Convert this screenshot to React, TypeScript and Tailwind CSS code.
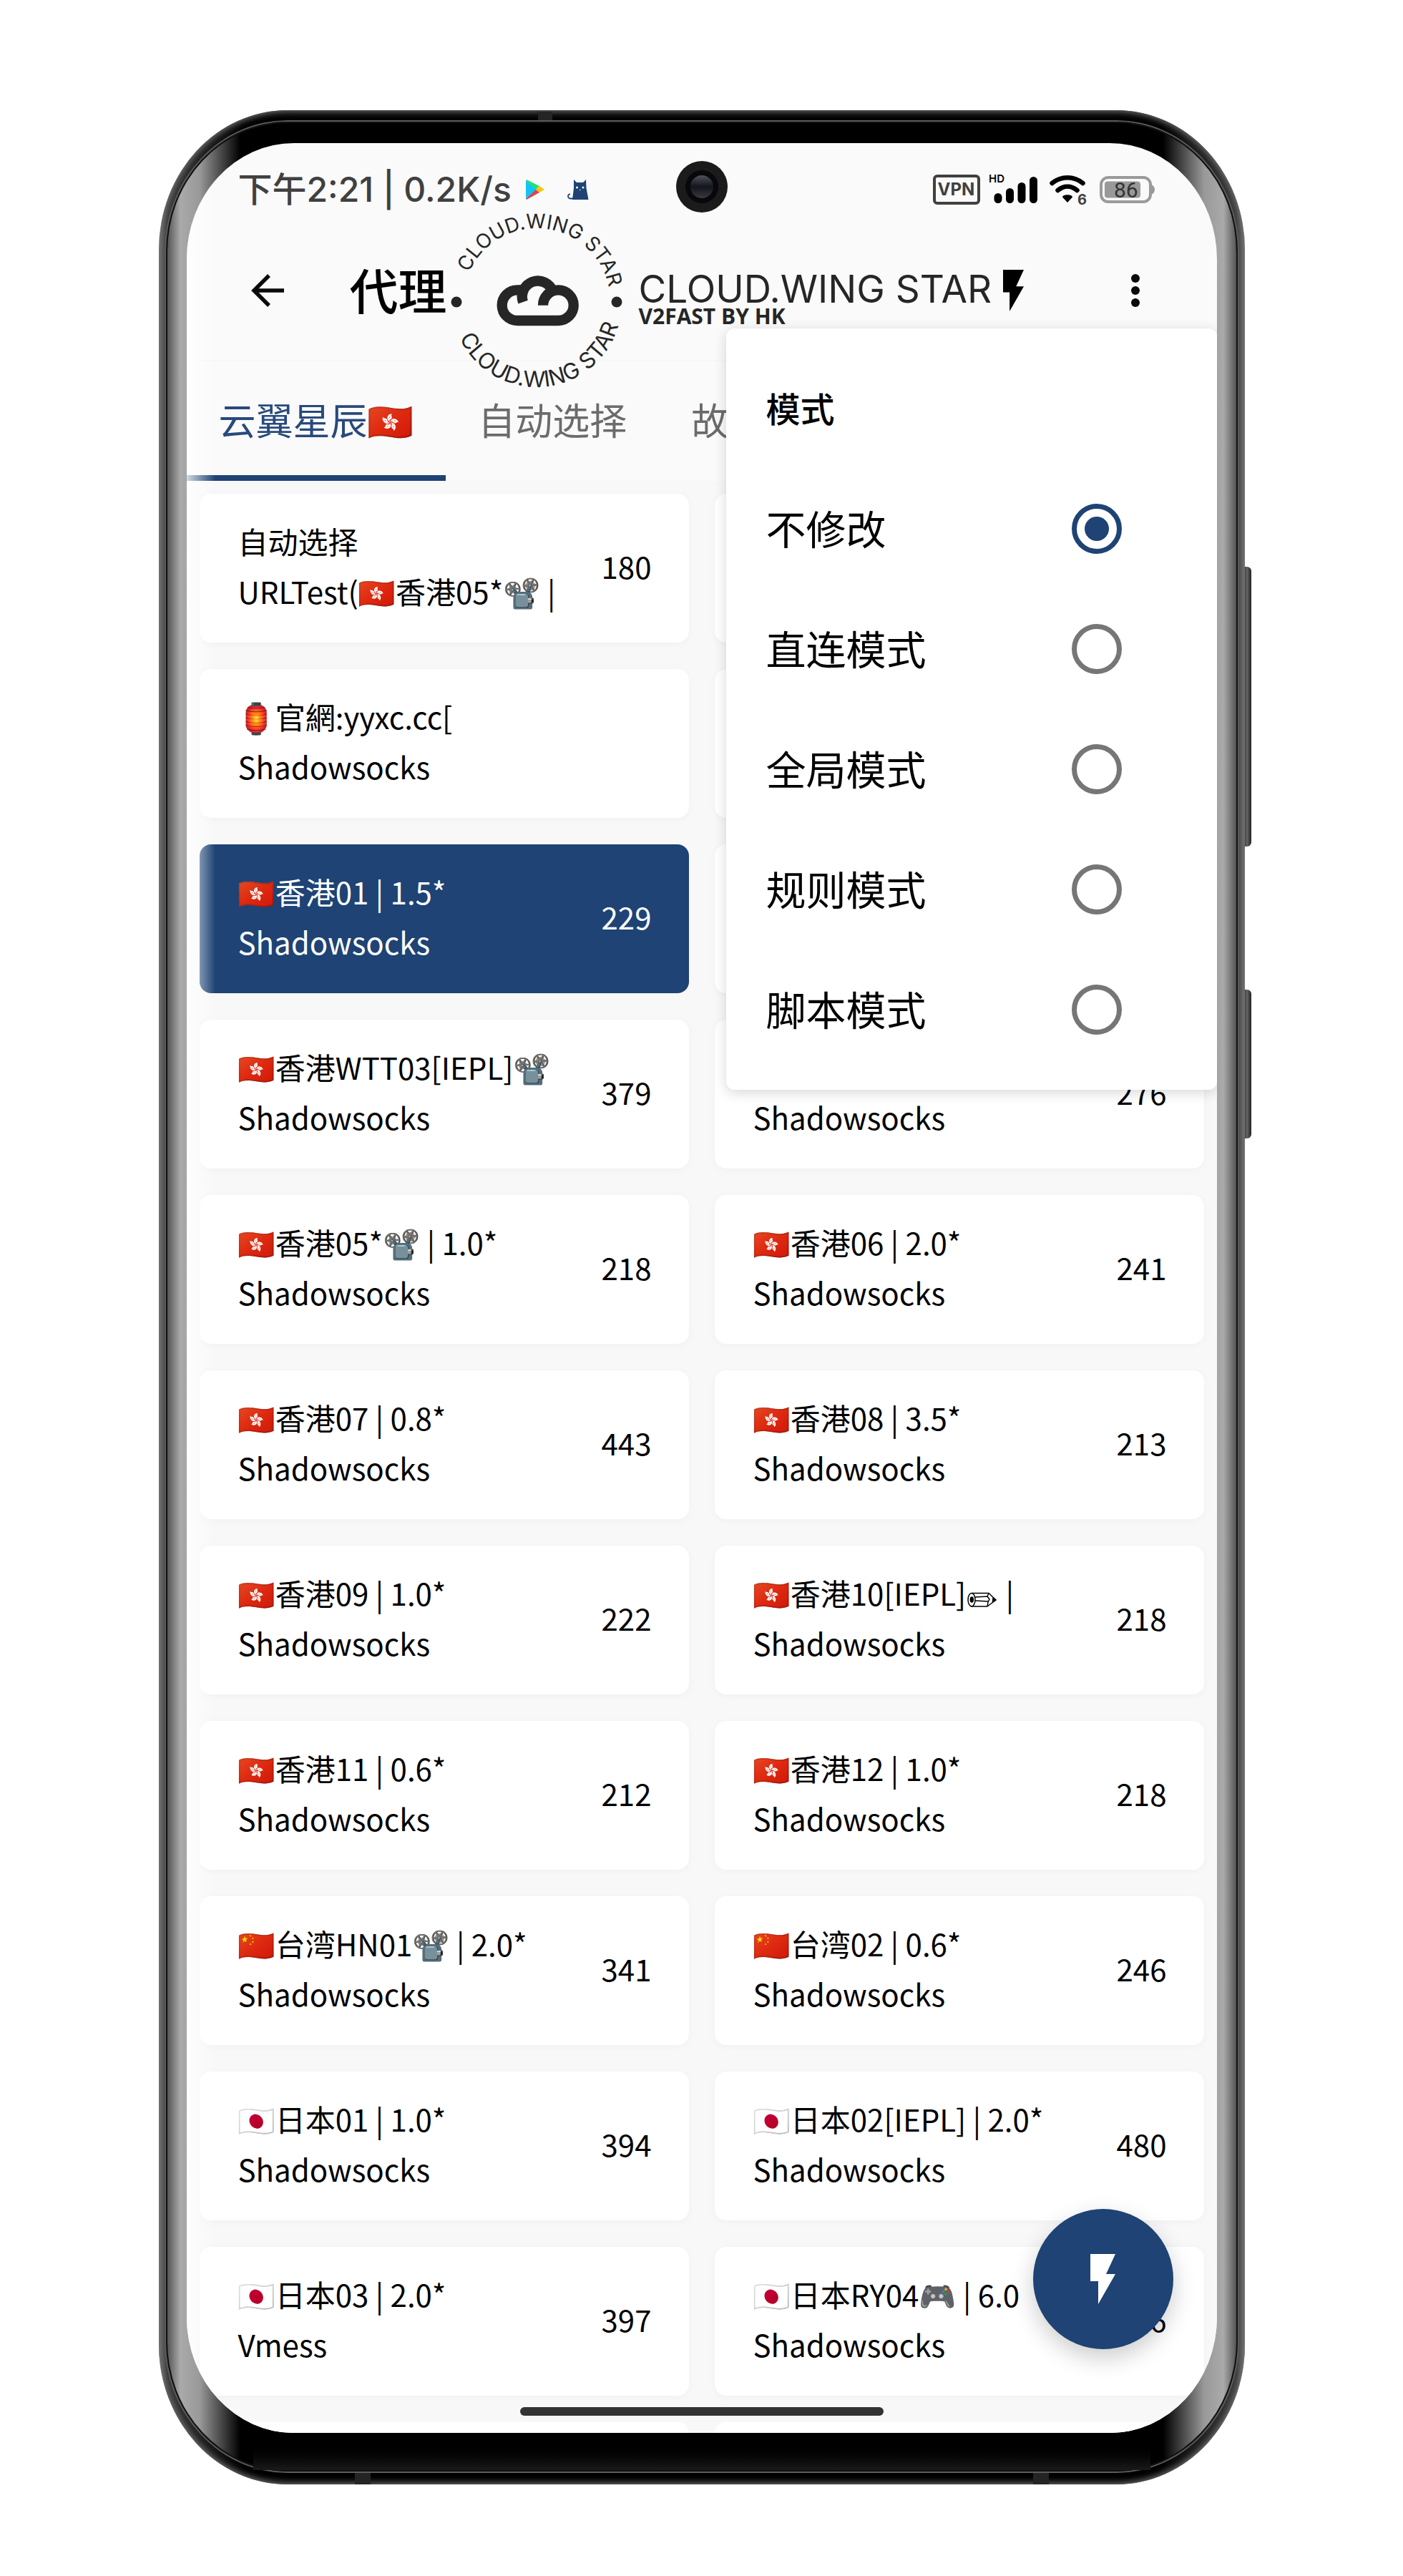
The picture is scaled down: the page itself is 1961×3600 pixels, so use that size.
import React from "react";

type Proxy = { name: React.ReactNode; kind: string; delay?: string; selected?: boolean };

function Pencil() {
  return (
    <svg
      viewBox="0 0 42 22"
      className="mx-0.5 inline-block h-[22px] w-[42px] align-[-3px]"
      fill="none"
      stroke="#000"
      strokeWidth="1.5"
      strokeLinejoin="round"
      role="img"
      aria-label="pencil"
    >
      <path d="M6 1.500 L30 1.500 L40 11 L28 20 L5 20" />
      <ellipse cx="6" cy="10.700" rx="5" ry="9.200" />
      <ellipse cx="6.300" cy="10.500" rx="2" ry="3.600" fill="#000" />
      <path d="M11 12 L30 13 M10 7 L29 6 M30 1.500 L28 6 L31 10 L29 14 L28 20" />
      <path d="M36 8 L40 11 L35.500 14 Z" fill="#000" />
    </svg>
  );
}

const proxies: Proxy[] = [
  { name: "自动选择", kind: "URLTest(🇭🇰香港05*📽️ |", delay: "180" },
  { name: "\u00a0", kind: "\u00a0" },
  { name: "🏮官網:yyxc.cc[", kind: "Shadowsocks" },
  { name: "\u00a0", kind: "\u00a0" },
  { name: "🇭🇰香港01 | 1.5*", kind: "Shadowsocks", delay: "229", selected: true },
  { name: "\u00a0", kind: "\u00a0" },
  { name: "🇭🇰香港WTT03[IEPL]📽️", kind: "Shadowsocks", delay: "379" },
  { name: "\u00a0", kind: "Shadowsocks", delay: "276" },
  { name: "🇭🇰香港05*📽️ | 1.0*", kind: "Shadowsocks", delay: "218" },
  { name: "🇭🇰香港06 | 2.0*", kind: "Shadowsocks", delay: "241" },
  { name: "🇭🇰香港07 | 0.8*", kind: "Shadowsocks", delay: "443" },
  { name: "🇭🇰香港08 | 3.5*", kind: "Shadowsocks", delay: "213" },
  { name: "🇭🇰香港09 | 1.0*", kind: "Shadowsocks", delay: "222" },
  { name: <>🇭🇰香港10[IEPL]<Pencil /> |</>, kind: "Shadowsocks", delay: "218" },
  { name: "🇭🇰香港11 | 0.6*", kind: "Shadowsocks", delay: "212" },
  { name: "🇭🇰香港12 | 1.0*", kind: "Shadowsocks", delay: "218" },
  { name: "🇨🇳台湾HN01📽️ | 2.0*", kind: "Shadowsocks", delay: "341" },
  { name: "🇨🇳台湾02 | 0.6*", kind: "Shadowsocks", delay: "246" },
  { name: "🇯🇵日本01 | 1.0*", kind: "Shadowsocks", delay: "394" },
  { name: "🇯🇵日本02[IEPL] | 2.0*", kind: "Shadowsocks", delay: "480" },
  { name: "🇯🇵日本03 | 2.0*", kind: "Vmess", delay: "397" },
  { name: "🇯🇵日本RY04🎮 | 6.0", kind: "Shadowsocks", delay: "226" },
];

const modes = ["不修改", "直连模式", "全局模式", "规则模式", "脚本模式"];

function StatusBar() {
  return (
    <div className="relative flex h-[130px] items-center justify-between pl-[72px] pr-[86px] text-[#404040]">
      <div className="flex items-center">
        <span className="font-['Inter','Noto_Sans_CJK_SC',sans-serif] text-5xl font-medium whitespace-nowrap">
          下午2:21 | 0.2K/s
        </span>
        <svg viewBox="0 0 26 28" className="ml-5 h-7 w-[26px]" aria-hidden="true">
          <path d="M0 1 L15 14 L0 27 Z" fill="#12c4f4" />
          <path d="M1 0 L19 9 L14 14 L0 1 Z" fill="#1fe07a" />
          <path d="M19 9 L26 14 L19 18 L14 14 Z" fill="#fdc40f" />
          <path d="M14 14 L19 18 L1 28 L0 27 Z" fill="#e0404c" />
        </svg>
        <svg viewBox="0 0 30 28" className="ml-8 h-7 w-[30px]" aria-hidden="true">
          <path
            d="M9 0 L13 4 H22 L26 0 L26.500 12 L29.500 28 H7 L9 12 Z"
            fill="#1e4374"
          />
          <path d="M8 26.500 H4 C0 26.500 0 20 4 20.500" fill="none" stroke="#1e4374" strokeWidth="1.800" />
          <circle cx="13.500" cy="11" r="1.500" fill="#fff" />
          <circle cx="22" cy="11" r="1.500" fill="#fff" />
          <circle cx="17.800" cy="14.500" r="0.800" fill="#fff" />
        </svg>
      </div>

      <div className="absolute left-1/2 top-[25px] flex size-[72px] -translate-x-1/2 items-center justify-center rounded-full bg-[#1b1b1c]">
        <div className="flex size-[46px] items-center justify-center rounded-full bg-[#07070c]">
          <div className="size-8 rounded-full bg-linear-to-b from-[#50545f] via-[#14151c] to-[#3a3b40]" />
        </div>
      </div>

      <div className="flex items-center">
        <span className="flex h-[42px] w-[66px] items-center justify-center rounded-md border-4 border-[#404040] font-['Inter',sans-serif] text-2xl leading-none font-bold">
          VPN
        </span>
        <svg viewBox="0 0 68 42" className="ml-3 h-[42px] w-[68px] overflow-visible text-black" aria-label="HD">
          <text x="0" y="11" fontFamily="Inter, sans-serif" fontSize="15" fontWeight="600">
            HD
          </text>
          <g stroke="currentColor" strokeWidth="11" strokeLinecap="round">
            <path d="M13 31.500 V34.500" />
            <path d="M29.500 24.500 V34.500" />
            <path d="M46 16.500 V34.500" />
            <path d="M62.500 8.500 V34.500" />
          </g>
        </svg>
        <svg viewBox="0 0 52 44" className="ml-[17px] h-11 w-[52px] overflow-visible" aria-label="Wi-Fi 6">
          <g fill="none" stroke="#000" strokeWidth="6.500" strokeLinecap="round">
            <path d="M3.500 13 C16 2.500 34 2.500 46.500 13" />
            <path d="M11.500 23 C20 16 30 16 38.500 23" />
          </g>
          <path d="M25 40 L18 32.500 C18 28 32 28 32 32.500 Z" fill="#000" />
          <text x="39" y="43" fontFamily="Inter, sans-serif" fontSize="20" fontWeight="700" fill="#404040">
            6
          </text>
        </svg>
        <svg viewBox="0 0 78 38" className="ml-[18px] h-[38px] w-[78px]" aria-label="86">
          <rect x="2" y="2" width="69" height="34" rx="10" fill="none" stroke="#9a9a9a" strokeWidth="4" />
          <path d="M72 12 Q77 14 77 19 Q77 24 72 26 Z" fill="#9a9a9a" />
          <rect x="7" y="7.500" width="50" height="23" rx="4" fill="#999" />
          <text x="20" y="30" fontFamily="Roboto, sans-serif" fontSize="30" fontWeight="400" fill="#333">
            86
          </text>
        </svg>
      </div>
    </div>
  );
}

function RingLogo() {
  return (
    <svg viewBox="0 0 250 250" className="size-[250px] shrink-0 overflow-visible" role="img" aria-label="Cloud.Wing Star">
      <defs>
        <path id="ring-top" d="M22 125 A103 103 0 0 1 228 125" />
        <path id="ring-bottom" d="M6 125 A119 119 0 0 0 244 125" />
      </defs>
      <g fontFamily="Inter, sans-serif" fill="#262626">
        <text fontSize="28">
          <textPath href="#ring-top" startOffset="42">
            CLOUD.WING STAR
          </textPath>
        </text>
        <text fontSize="31">
          <textPath href="#ring-bottom" startOffset="52">
            CLOUD.WING STAR
          </textPath>
        </text>
      </g>
      <circle cx="13" cy="125" r="7.500" fill="#262626" />
      <circle cx="237" cy="125" r="7.500" fill="#262626" />
      <g
        transform="translate(-6.300 -17.300) scale(0.3333)"
        fill="none"
        stroke="#262626"
        strokeWidth="43"
      >
        <path d="M337 427 A63 63 0 1 1 462 383" />
        <path d="M313 377 A64 64 0 0 0 313 505 H486 A64 64 0 1 0 421 441" />
        <path d="M313 377 H336" />
      </g>
    </svg>
  );
}

function Bolt({ className }: { className: string }) {
  return (
    <svg viewBox="0 0 35 70" className={className} fill="currentColor" aria-hidden="true">
      <path d="M0 0 H35 L22 28 H35 L11 70 V38 H0 Z" />
    </svg>
  );
}

function Header() {
  return (
    <header className="flex h-[152px] items-center pl-[90px] pr-[108px] text-black">
      <button type="button" aria-label="返回" className="shrink-0">
        <svg viewBox="0 0 46 46" className="size-[46px]" fill="none" stroke="#0a0a0a" strokeWidth="5.500">
          <path d="M46 23 H5 M25 2 L4 23 L25 44" />
        </svg>
      </button>
      <h1 className="ml-[92px] pb-1 text-[68px] font-medium leading-none whitespace-nowrap">代理</h1>
      <div className="-mb-4 mt-4 shrink-0">
        <RingLogo />
      </div>
      <div className="ml-[18px] flex items-center">
        <div className="flex flex-col pt-5 font-['Inter',sans-serif] text-[#262626]">
          <span className="text-[53px] leading-[52px] whitespace-nowrap">CLOUD.WING STAR</span>
          <span className="font-['Open_Sans',sans-serif] text-3xl leading-6 font-bold whitespace-nowrap">
            V2FAST BY HK
          </span>
        </div>
        <Bolt className="ml-4 h-[58px] w-[29px]" />
      </div>
      <button type="button" aria-label="更多" className="ml-auto flex flex-col gap-[5px]">
        <span className="size-3 rounded-full bg-[#0a0a0a]" />
        <span className="size-3 rounded-full bg-[#0a0a0a]" />
        <span className="size-3 rounded-full bg-[#0a0a0a]" />
      </button>
    </header>
  );
}

function Tabs() {
  return (
    <nav
      role="tablist"
      className="mt-[22px] flex h-[168px] overflow-hidden text-[52px] leading-[164px] whitespace-nowrap text-[#6b6b6b] shadow-[0_1px_3px_rgba(0,0,0,0.12)]"
    >
      <button
        type="button"
        role="tab"
        aria-selected="true"
        className="h-full shrink-0 border-b-8 border-[#1e4374] px-[45px] text-[#284a7c]"
      >
        云翼星辰🇭🇰
      </button>
      <button type="button" role="tab" aria-selected="false" className="h-full shrink-0 border-b-8 border-transparent px-[45px]">
        自动选择
      </button>
      <button type="button" role="tab" aria-selected="false" className="h-full shrink-0 border-b-8 border-transparent px-[45px]">
        故
      </button>
    </nav>
  );
}

function ProxyCard({ proxy }: { proxy: Proxy }) {
  return (
    <button
      type="button"
      className={
        proxy.selected
          ? "flex h-[208px] min-w-0 items-center justify-between rounded-2xl bg-[#1e4374] pb-1.5 pl-[54px] pr-[52px] text-left text-white"
          : "flex h-[208px] min-w-0 items-center justify-between rounded-2xl bg-white pb-1.5 pl-[54px] pr-[52px] text-left text-black shadow-[0_2px_12px_rgba(0,0,0,0.035)]"
      }
    >
      <span className="flex min-w-0 flex-col text-[42px] leading-[70px] whitespace-nowrap">
        <span>{proxy.name}</span>
        <span>{proxy.kind}</span>
      </span>
      {proxy.delay && <span className="text-[42px] leading-[70px]">{proxy.delay}</span>}
    </button>
  );
}

function ModeMenu() {
  return (
    <fieldset className="absolute right-0 top-[259px] z-20 w-[686px] rounded-xl bg-white py-7 text-black shadow-[0_4px_18px_rgba(0,0,0,0.16)]">
      <legend className="sr-only">模式</legend>
      <p className="flex h-[168px] items-center px-[56px] pb-1 text-5xl font-medium">模式</p>
      {modes.map((mode, i) => (
        <label key={mode} className="flex h-[168px] items-center justify-between pl-[56px] pr-[133px] text-[56px]">
          <span className="pb-1">{mode}</span>
          <input
            type="radio"
            name="mode"
            defaultChecked={i === 0}
            className="size-[70px] appearance-none rounded-full border-[7px] border-[#767676] bg-clip-content p-[11px] checked:border-[#1e4374] checked:bg-[#1e4374]"
          />
        </label>
      ))}
    </fieldset>
  );
}

export default function App() {
  return (
    <main className="min-h-screen bg-white px-4 pb-32 pt-[154px] font-['Noto_Sans_CJK_SC','Noto_Color_Emoji',sans-serif]">
      <div className="relative mx-auto w-full max-w-[1518px]">
        <div className="absolute -right-[9px] top-[638px] h-[391px] w-3 rounded-r-md bg-linear-to-r from-[#222] via-[#666] to-[#222]" />
        <div className="absolute -right-[9px] top-[1229px] h-[208px] w-3 rounded-r-md bg-linear-to-r from-[#222] via-[#666] to-[#222]" />

        <div className="relative rounded-[180px/195px] bg-[linear-gradient(90deg,#666_0,#3a3a3a_12px,#000_120px,#000_calc(100%-120px),#3a3a3a_calc(100%-12px),#666_100%)] px-2.5 pb-[18px] pt-4 shadow-[inset_0_0_10px_2px_#777]">
          <div className="absolute left-[530px] top-0.5 h-3.5 w-5 bg-[#242424]" />
          <div className="absolute bottom-0 left-[274px] h-4 w-[22px] bg-[#242424]" />
          <div className="absolute bottom-0 right-[274px] h-4 w-[22px] bg-[#242424]" />

          <div className="relative rounded-[170px/182px] border-2 border-[#111] bg-[linear-gradient(90deg,#555_0,#aaa_18px,#999_45px,#000_102px,#000_calc(100%-102px),#999_calc(100%-45px),#aaa_calc(100%-18px),#555_100%)] px-[27px] pb-[52px] pt-7 shadow-[0_0_0_2px_#5c5c5c]">
            <div className="absolute bottom-0 left-[120px] right-[120px] h-11 bg-linear-to-t from-[#1a1a1a] to-black" />

            <div className="relative overflow-hidden rounded-[150px/162px] bg-[#fafafa]">
              <StatusBar />
              <Header />
              <Tabs />
              <div className="grid grid-cols-2 gap-x-9 gap-y-[37px] bg-[#f8f8f8] px-[18px] pt-[18px]">
                {proxies.map((proxy, i) => (
                  <ProxyCard key={i} proxy={proxy} />
                ))}
                <div className="h-[15px] rounded-t-2xl bg-white" />
                <div className="h-[15px] rounded-t-2xl bg-white" />
              </div>

              <ModeMenu />

              <button
                type="button"
                aria-label="测速"
                className="absolute bottom-[117px] right-[61px] flex size-[196px] items-center justify-center rounded-full bg-[#1e4374] text-white shadow-[0_12px_32px_rgba(0,0,0,0.2)]"
              >
                <Bolt className="h-[70px] w-[35px]" />
              </button>
              <div className="absolute bottom-6 left-1/2 h-3 w-[508px] -translate-x-1/2 rounded-full bg-[#333]" />
              <div className="pointer-events-none absolute inset-y-0 left-0 w-10 bg-linear-to-r from-white/80 to-transparent" />
            </div>
          </div>
        </div>
      </div>
    </main>
  );
}
